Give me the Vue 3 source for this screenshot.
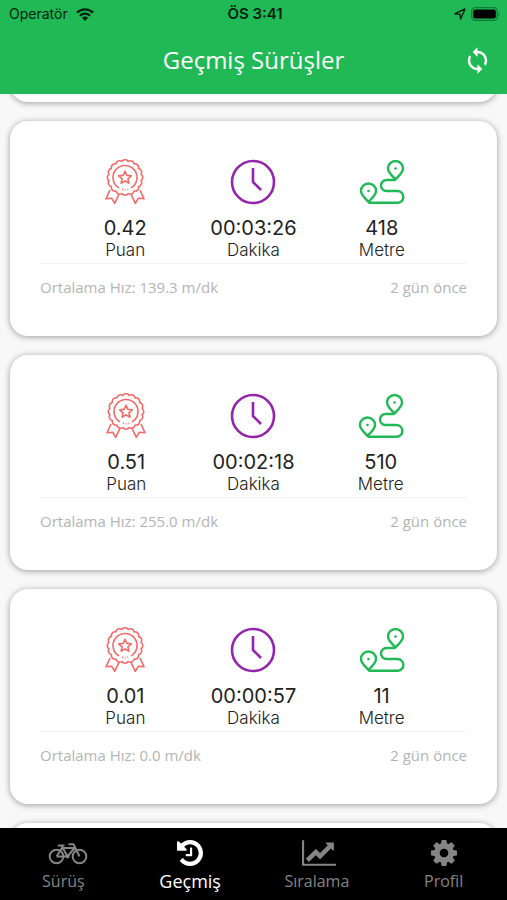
<script setup>
const rides = [
  { id: 1, points: '0.42', time: '00:03:26', metres: '418', speed: '139.3', ago: '2 gün önce' },
  { id: 2, points: '0.51', time: '00:02:18', metres: '510', speed: '255.0', ago: '2 gün önce' },
  { id: 3, points: '0.01', time: '00:00:57', metres: '11', speed: '0.0', ago: '2 gün önce' },
]

// Scalloped edge of the medal: a ring of small outward arcs
function scallop(cx, cy, r, count) {
  const at = (i) => {
    const a = (i / count) * Math.PI * 2 - Math.PI / 2 + Math.PI / count
    return `${(cx + r * Math.cos(a)).toFixed(2)} ${(cy + r * Math.sin(a)).toFixed(2)}`
  }
  let d = `M${at(0)}`
  for (let i = 1; i <= count; i++) d += `A3.9 3.9 0 0 1 ${at(i)}`
  return d + 'Z'
}
const medalEdge = scallop(23, 18.5, 16.4, 16)
</script>

<template>
  <div class="screen">
    <header class="header">
      <div class="status">
        <div class="carrier">
          <span>Operatör</span>
          <svg class="wifi" viewBox="0 0 18 13" aria-hidden="true">
            <path d="M1 4.700A11.500 11.500 0 0 1 17 4.700M3.900 7.700A7.300 7.300 0 0 1 14.100 7.700" fill="none" stroke="currentColor" stroke-width="2.300" />
            <path d="M9 13L5.900 9.800A4.400 4.400 0 0 1 12.100 9.800Z" fill="currentColor" />
          </svg>
        </div>
        <span class="clock">ÖS 3:41</span>
        <div class="power">
          <svg class="arrow" viewBox="0 0 12 12" aria-hidden="true">
            <path d="M1 5.700L11 1L6.600 11L5.900 6.200Z" fill="none" stroke="currentColor" stroke-width="1.400" stroke-linejoin="round" />
          </svg>
          <svg class="battery" viewBox="0 0 30 14" aria-hidden="true">
            <rect x="0.700" y="0.700" width="25.600" height="12.600" rx="3.500" fill="none" stroke="#0f7a37" stroke-width="1.300" />
            <rect x="2.200" y="2.400" width="22.600" height="9.200" rx="2" fill="#000" />
            <path d="M27.700 4.800Q29.600 7 27.700 9.200Z" fill="#0f7a37" />
          </svg>
        </div>
      </div>
      <div class="titlebar">
        <h1>Geçmiş Sürüşler</h1>
        <button class="refresh" type="button" aria-label="Yenile">
          <svg viewBox="0 0 24 24" aria-hidden="true">
            <path fill="currentColor" d="M12 4V1L8 5l4 4V6c3.310 0 6 2.690 6 6 0 1.010-.25 1.970-.7 2.800l1.460 1.460C19.540 15.030 20 13.570 20 12c0-4.420-3.580-8-8-8zm0 14c-3.310 0-6-2.690-6-6 0-1.010.25-1.970.7-2.800L5.240 7.740C4.460 8.970 4 10.430 4 12c0 4.420 3.580 8 8 8v3l4-4-4-4v3z" />
          </svg>
        </button>
      </div>
    </header>

    <main class="list">
      <div class="card previous"></div>
      <article v-for="ride in rides" :key="ride.id" class="card">
        <div class="stats">
          <div class="stat">
            <svg class="icon medal" viewBox="0 0 46 46" aria-hidden="true">
              <path :d="medalEdge" />
              <path d="M17 28.900A12 12 0 1 1 29 28.900" />
              <path d="M20 30.200L20.900 30.400M22.700 30.700H23.600M25.400 30.400L26.200 30.200" />
              <path d="M23 12.200L24.800 16.400L29.300 16.800L25.900 19.800L26.900 24.200L23 21.900L19.100 24.200L20.100 19.800L16.700 16.800L21.200 16.400Z" />
              <path d="M8 31L4 39.800L9.600 39.200L12.700 44.300L17.300 34.700M38 31L42 39.800L36.400 39.200L33.300 44.300L28.700 34.700" />
            </svg>
            <strong>{{ ride.points }}</strong>
            <span>Puan</span>
          </div>
          <div class="stat">
            <svg class="icon timer" viewBox="0 0 46 46" aria-hidden="true">
              <circle cx="23" cy="23" r="21" />
              <path d="M23 9V23L31 31" />
            </svg>
            <strong>{{ ride.time }}</strong>
            <span>Dakika</span>
          </div>
          <div class="stat">
            <svg class="icon route" viewBox="0 0 46 46" aria-hidden="true">
              <path d="M36.500 20.500C33 16.500 29 13.500 29 9.500A7.500 7.500 0 0 1 44 9.500C44 13.500 40 16.500 36.500 20.500Z" />
              <path d="M9.500 43C6 39 2 36 2 32A7.500 7.500 0 0 1 17 32C17 36 13 39 9.500 43Z" />
              <path d="M36.500 21H27.500A5.500 5.500 0 0 0 27.500 32H38.500A5.900 5.900 0 0 1 38.500 43.800H9.500" />
              <circle class="dot" cx="36.500" cy="9.500" r="1.300" />
              <circle class="dot" cx="9.500" cy="32" r="1.300" />
            </svg>
            <strong>{{ ride.metres }}</strong>
            <span>Metre</span>
          </div>
        </div>
        <footer class="meta">
          <span>Ortalama Hız: {{ ride.speed }} m/dk</span>
          <time>{{ ride.ago }}</time>
        </footer>
      </article>
      <div class="card"></div>
    </main>

    <nav class="tabs">
      <a class="tab" href="#surus">
        <span class="glyph">
          <svg class="bike" viewBox="0 0 40 24" aria-hidden="true">
            <g fill="none" stroke="currentColor" stroke-width="2" stroke-linejoin="round">
              <circle cx="8.500" cy="15.500" r="6.800" />
              <circle cx="31.500" cy="15.500" r="6.800" />
              <path d="M8.500 15.500L14 7H26.500L19.500 15.500H8.500M19.500 15.500L13.500 4.500M9.800 4.500H16.500M31.500 15.500L25.500 3.200H20.500" />
            </g>
            <circle cx="19.500" cy="15.500" r="2" fill="currentColor" />
          </svg>
        </span>
        <span>Sürüş</span>
      </a>
      <a class="tab active" href="#gecmis" aria-current="page">
        <span class="glyph">
          <svg viewBox="0 128 1536 1536" aria-hidden="true">
            <path fill="currentColor" d="M1536 896q0 156-61 298t-164 245-245 164-298 61q-172 0-327-72.500t-264-204.500q-7-10-6.500-22.500t8.500-20.500l137-138q10-9 25-9 16 2 23 12 73 95 179 147t225 52q104 0 198.500-40.500t163.500-109.500 109.500-163.500 40.500-198.500-40.500-198.500-109.500-163.500-163.500-109.500-198.500-40.500q-98 0-188 35.500t-160 101.500l137 138q31 30 14 69-17 40-59 40h-448q-26 0-45-19t-19-45v-448q0-42 40-59 39-17 69 14l130 129q107-101 244.500-156.500t284.500-55.500q156 0 298 61t245 164 164 245 61 298zm-640-288v448q0 14-9 23t-23 9h-320q-14 0-23-9t-9-23v-64q0-14 9-23t23-9h224v-352q0-14 9-23t23-9h64q14 0 23 9t9 23z" />
          </svg>
        </span>
        <span>Geçmiş</span>
      </a>
      <a class="tab" href="#siralama">
        <span class="glyph">
          <svg class="chart" viewBox="0 128 2048 1536" aria-hidden="true">
            <path fill="currentColor" d="M2048 1536v128h-2048v-1536h128v1408h1920zm-128-1248v435q0 21-19.500 29.500t-35.500-7.500l-121-121-633 633q-10 10-23 10t-23-10l-233-233-416 416-192-192 585-585q10-10 23-10t23 10l233 233 464-464-121-121q-16-16-7.500-35.500t29.500-19.500h435q14 0 23 9t9 23z" />
          </svg>
        </span>
        <span>Sıralama</span>
      </a>
      <a class="tab" href="#profil">
        <span class="glyph">
          <svg viewBox="128 128 1536 1536" aria-hidden="true">
            <path fill="currentColor" d="M1152 896q0-106-75-181t-181-75-181 75-75 181 75 181 181 75 181-75 75-181zm512-109v222q0 12-8 23t-20 13l-185 28q-19 54-39 91 35 50 107 138 10 12 10 25t-9 23q-27 37-99 108t-94 71q-12 0-26-9l-138-108q-44 23-91 38-16 136-29 186-7 28-36 28h-222q-14 0-24.500-8.500t-11.500-21.500l-28-184q-49-16-90-37l-141 107q-10 9-25 9-14 0-25-11-126-114-165-168-7-10-7-23 0-12 8-23 15-21 51-66.500t54-70.500q-27-50-41-99l-183-27q-13-2-21-12.500t-8-23.500v-222q0-12 8-23t19-13l186-28q14-46 39-92-40-57-107-138-10-12-10-24 0-10 9-23 26-36 98.500-107.500t94.500-71.500q13 0 26 10l138 107q44-23 91-38 16-136 29-186 7-28 36-28h222q14 0 24.500 8.500t11.500 21.500l28 184q49 16 90 37l142-107q9-9 24-9 13 0 25 10 129 119 165 170 7 8 7 22 0 12-8 23-15 21-51 66.500t-54 70.500q26 50 41 98l183 28q13 2 21 12.500t8 23.500z" />
          </svg>
        </span>
        <span>Profil</span>
      </a>
    </nav>
  </div>
</template>

<style>
body {
  background: #f8f8f8;
}
</style>

<style scoped>
.screen {
  display: flex;
  flex-direction: column;
  height: 100vh;
  overflow: hidden;
  background: #f8f8f8;
  font-family: "Open Sans", "Noto Sans", sans-serif;
}

.header {
  flex: none;
  background: #20b956;
  color: #fff;
}

.status {
  display: grid;
  grid-template-columns: 1fr auto 1fr;
  align-items: center;
  height: 28px;
  padding: 0 6px 0 9px;
  color: #03220f;
  font: 14px/20px Inter, sans-serif;
}

.carrier {
  display: flex;
  align-items: center;
  gap: 8px;
}

.wifi {
  width: 18px;
  height: 13px;
}

.clock {
  font-size: 15px;
  font-weight: 600;
}

.power {
  display: flex;
  justify-content: flex-end;
  align-items: center;
  gap: 5px;
}

.arrow {
  width: 12px;
  height: 12px;
}

.battery {
  width: 30px;
  height: 14px;
}

.titlebar {
  display: grid;
  grid-template-columns: 1fr auto 1fr;
  align-items: center;
  height: 64px;
  padding: 0 15px 2px;
}

.titlebar h1 {
  grid-column: 2;
  margin: 0;
  font-size: 24px;
  font-weight: 400;
  line-height: 32px;
}

.refresh {
  justify-self: end;
  display: flex;
  padding: 0;
  border: 0;
  background: none;
  color: #fff;
}

.refresh svg {
  width: 29px;
  height: 29px;
}

.list {
  flex: 1;
  min-height: 0;
  display: flex;
  flex-direction: column;
  gap: 19px;
  padding: 0 10px;
  overflow: hidden;
}

.card {
  flex: none;
  box-sizing: border-box;
  min-height: 215px;
  padding: 38px 30px;
  border-radius: 18px;
  background: #fff;
  box-shadow: 0 1px 6px rgba(0, 0, 0, 0.38);
}

.card.previous {
  margin-top: -207px;
}

.stats {
  display: flex;
  justify-content: space-evenly;
  padding-bottom: 3px;
  border-bottom: 1px solid #f2f2f2;
}

.stat {
  display: flex;
  flex-direction: column;
  align-items: center;
  color: #222;
  font-family: Inter, sans-serif;
}

.stat strong {
  margin-top: 11px;
  font-size: 20px;
  font-weight: 400;
  line-height: 24px;
}

.stat span {
  font-size: 17px;
  font-weight: 300;
  line-height: 20px;
}

.icon {
  width: 46px;
  height: 46px;
  fill: none;
  stroke-linejoin: round;
}

.medal {
  stroke: #f26b68;
  stroke-width: 1.6px;
}

.timer {
  stroke: #9524ad;
  stroke-width: 2.6px;
}

.route {
  stroke: #20b956;
  stroke-width: 2.4px;
}

.route .dot {
  fill: #20b956;
  stroke: none;
}

.meta {
  display: flex;
  justify-content: space-between;
  margin-top: 13px;
  color: #b4b4b4;
  font-size: 15px;
  line-height: 20px;
}

.tabs {
  flex: none;
  display: grid;
  grid-template-columns: repeat(4, 1fr);
  height: 72px;
  background: #000;
}

.tab {
  display: flex;
  flex-direction: column;
  align-items: center;
  gap: 3px;
  padding-top: 12px;
  color: #858585;
  font-size: 16px;
  line-height: 24px;
  text-decoration: none;
}

/* Wide icons keep the box's left edge and run past its right one */
.glyph {
  display: flex;
  justify-content: safe center;
  width: 30px;
}

.glyph svg {
  flex: none;
  width: 26px;
  height: 26px;
}

.glyph .bike {
  width: 40px;
}

.glyph .chart {
  width: 34px;
}

.tab.active {
  color: #fff;
  font-size: 18px;
}
</style>
